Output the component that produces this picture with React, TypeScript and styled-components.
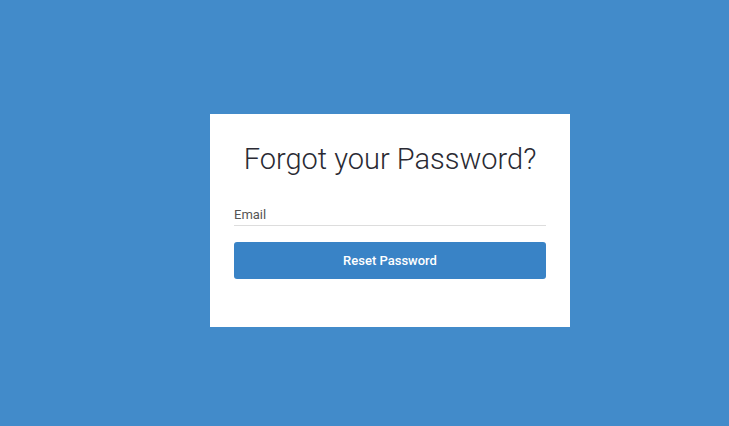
import React from 'react';
import styled, { createGlobalStyle } from 'styled-components';

const GlobalStyle = createGlobalStyle`
  html, body {
    margin: 0;
    padding: 0;
    height: 100%;
    background-color: #428bca;
    font-family: Roboto, "Liberation Sans", sans-serif;
  }
  #root {
    height: 100%;
  }
`;

const Page = styled.div`
  height: 426px;
  display: flex;
  justify-content: center;
  padding-top: 114px;
  padding-left: 51px;
  box-sizing: border-box;
`;

const Card = styled.form`
  width: 360px;
  height: 213px;
  box-sizing: border-box;
  background-color: #ffffff;
  padding: 28px 24px 48px;
`;

const Title = styled.h1`
  margin: 0 0 30px;
  font-family: Roboto, sans-serif;
  font-weight: 300;
  font-size: 29px;
  line-height: 34px;
  color: #2a2a33;
  text-align: center;
`;

const EmailInput = styled.input`
  display: block;
  width: 100%;
  box-sizing: border-box;
  border: none;
  border-bottom: 1px solid #dddddd;
  padding: 0 0 3px;
  height: 20px;
  font-family: Roboto, sans-serif;
  font-size: 13px;
  color: #333333;
  outline: none;
  &::placeholder {
    color: #555555;
  }
`;

const Button = styled.button`
  display: block;
  width: 100%;
  height: 37px;
  margin-top: 16px;
  border: none;
  border-radius: 3px;
  background-color: #3983c6;
  color: #ffffff;
  font-family: Roboto, sans-serif;
  font-weight: 500;
  font-size: 13px;
  cursor: pointer;
`;

const App = () => {
  return (
    <>
      <GlobalStyle />
      <Page>
        <Card onSubmit={(e) => e.preventDefault()}>
          <Title>Forgot your Password?</Title>
          <EmailInput type="email" placeholder="Email" />
          <Button type="submit">Reset Password</Button>
        </Card>
      </Page>
    </>
  );
};

export default App;
